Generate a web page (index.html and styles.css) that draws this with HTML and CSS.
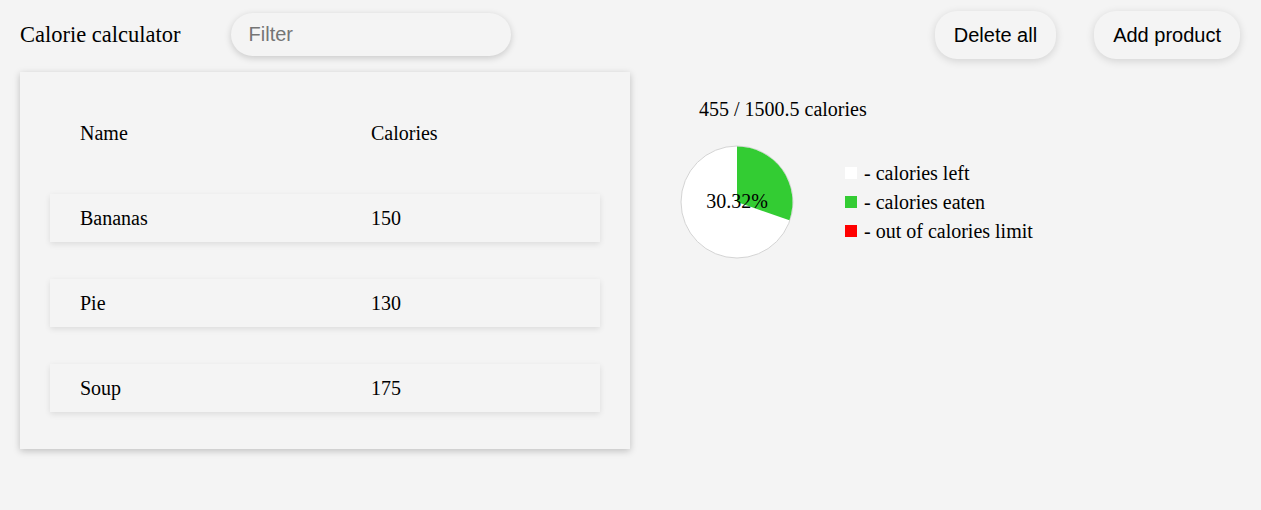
FILE: index.html
```html
<!DOCTYPE html>
<html lang="en">
<head>
<meta charset="utf-8">
<title>Calorie calculator</title>
<link rel="stylesheet" href="styles.css">
</head>
<body>
<header class="header">
  <div class="title">Calorie calculator</div>
  <input class="filter" type="text" placeholder="Filter">
  <div class="spacer"></div>
  <div class="actions">
    <button class="btn">Delete all</button>
    <button class="btn">Add product</button>
  </div>
</header>
<main class="main">
  <section class="card">
    <div class="row head"><span>Name</span><span>Calories</span></div>
    <div class="row item"><span>Bananas</span><span>150</span></div>
    <div class="row item"><span>Pie</span><span>130</span></div>
    <div class="row item"><span>Soup</span><span>175</span></div>
  </section>
  <section class="stats">
    <div class="total">455 / 1500.5 calories</div>
    <div class="chart-wrap">
      <div class="pie">
        <svg width="114" height="114" viewBox="0 0 114 114">
          <circle cx="57" cy="57" r="56" fill="#ffffff" stroke="#d4d4d4" stroke-width="1"/>
          <path d="M57 57 L57 1.5 A55.5 55.5 0 0 1 109.4 75.2 Z" fill="#33cc33"/>
        </svg>
        <span class="pct">30.32%</span>
      </div>
      <ul class="legend">
        <li><i class="sw white"></i>- calories left</li>
        <li><i class="sw green"></i>- calories eaten</li>
        <li><i class="sw red"></i>- out of calories limit</li>
      </ul>
    </div>
  </section>
</main>
</body>
</html>
```
FILE: styles.css
```css
html {
  background: #f4f4f4;
}

body {
  margin: 0;
  padding: 0 0 40px 0;
  min-height: 100vh;
  box-sizing: border-box;
  font-family: "Liberation Serif", "Times New Roman", serif;
  font-size: 20px;
  color: #000;
}

.header {
  display: flex;
  align-items: center;
  padding: 11px 21px 0 20px;
  height: 48px;
}

.title {
  font-size: 22.5px;
  margin-right: 50px;
}

.filter {
  width: 280px;
  height: 43px;
  margin-top: -2px;
  box-sizing: border-box;
  border: none;
  outline: none;
  border-radius: 22px;
  background: #f4f4f4;
  box-shadow: 0 2px 7px rgba(0, 0, 0, 0.18);
  padding: 0 18px;
  font-family: "Liberation Sans", Arial, sans-serif;
  font-size: 20px;
  color: #000;
}

.filter::placeholder {
  color: #757575;
}

.spacer {
  flex: 1;
}

.actions {
  display: flex;
  gap: 38px;
}

.btn {
  height: 48px;
  padding: 0 19px;
  border: none;
  border-radius: 22px;
  background: #f4f4f4;
  box-shadow: 0 2px 8px rgba(0, 0, 0, 0.14);
  font-family: "Liberation Sans", Arial, sans-serif;
  font-size: 20px;
  color: #000;
  cursor: pointer;
}

.main {
  display: flex;
  align-items: flex-start;
  padding: 13px 0 0 20px;
}

.card {
  width: 610px;
  box-sizing: border-box;
  padding: 37px 30px;
  display: flex;
  flex-direction: column;
  gap: 37px;
  background: #f4f4f4;
  box-shadow: 0 2px 7px rgba(0, 0, 0, 0.22);
}

.row {
  display: grid;
  grid-template-columns: 291px 1fr;
  align-items: center;
  height: 48px;
  padding-left: 30px;
}

.item {
  box-shadow: 0 2px 6px rgba(0, 0, 0, 0.1);
}

.stats {
  margin-left: 50px;
  padding-top: 26px;
}

.total {
  margin-left: 19px;
  line-height: 23px;
}

.chart-wrap {
  display: flex;
  align-items: center;
  margin-top: 24px;
}

.pie {
  position: relative;
  width: 114px;
  height: 114px;
}

.pie svg {
  display: block;
}

.pct {
  position: absolute;
  left: 0;
  right: 0;
  top: 45px;
  text-align: center;
  line-height: 23px;
}

.legend {
  list-style: none;
  margin: 0 0 0 51px;
  padding: 0;
}

.legend li {
  display: flex;
  align-items: center;
  line-height: 29px;
}

.sw {
  display: inline-block;
  width: 12px;
  height: 12px;
  margin-right: 7px;
}

.sw.white { background: #ffffff; }
.sw.green { background: #33cc33; }
.sw.red { background: #ff0000; }
```
